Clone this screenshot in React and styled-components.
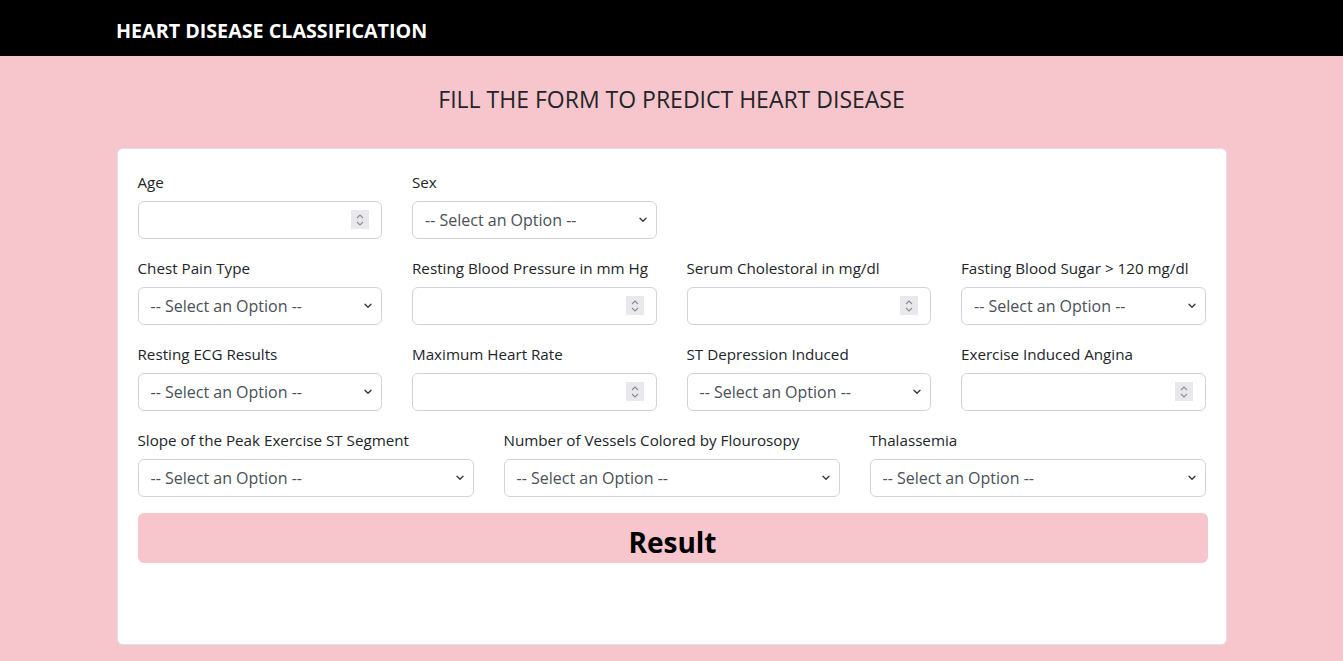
import styled, { createGlobalStyle } from 'styled-components';

const GlobalStyle = createGlobalStyle`
    * { box-sizing: border-box; }
    body {
        margin: 0;
        background: #f7c5cc;
        font-family: "Open Sans", "Noto Sans", sans-serif;
        color: #212529;
    }
`;

const Navbar = styled.nav`
    height: 56px;
    background: #000;
    display: flex;
    align-items: center;
    padding-left: 116px;
`;

const Brand = styled.div`
    color: #fff;
    font-weight: 700;
    font-size: 19.7px;
    padding-top: 4px;
`;

const Main = styled.main`
    padding-top: 29px;
    padding-bottom: 17px;
    display: flex;
    flex-direction: column;
    align-items: center;
`;

const Title = styled.h1`
    margin: 0 0 34px;
    font-size: 23px;
    font-weight: 400;
    line-height: 29px;
    color: #212529;
`;

const Card = styled.div`
    width: 1110px;
    background: #fff;
    border: 1px solid #dee2e6;
    border-radius: 6px;
    padding: 20px 20px 81px;
`;

const Row = styled.div`
    display: grid;
    grid-template-columns: repeat(${p => p.$cols}, 1fr);
    column-gap: 30px;
    margin-bottom: 16px;
`;

const Field = styled.div`
    display: flex;
    flex-direction: column;
`;

const Label = styled.label`
    font-size: 15.2px;
    line-height: 24px;
    padding-top: 1px;
    margin-bottom: 7px;
`;

const Control = styled.div`
    position: relative;
    height: 38px;
`;

const Box = styled.div`
    height: 38px;
    border: 1px solid #ced4da;
    border-radius: 6px;
    background: #fff;
    padding: 0 12px;
    display: flex;
    align-items: center;
    font-size: 16px;
    color: #495057;
`;

const Spinner = styled.span`
    position: absolute;
    right: 13px;
    top: 9px;
    width: 18px;
    height: 19px;
    background: #e9e9ed;
    display: flex;
    align-items: center;
    justify-content: center;
`;

const Chevron = styled.svg`
    position: absolute;
    right: 9px;
    top: 15px;
`;

const ResultButton = styled.button`
    display: block;
    width: 1070px;
    height: 50px;
    border: none;
    border-radius: 6px;
    background: #f7c5cc;
    color: #000;
    font-family: inherit;
    font-weight: 700;
    font-size: 28px;
    padding: 8px 0 0;
`;

function NumberInput() {
    return (
        <Control>
            <Box />
            <Spinner>
                <svg width="10" height="14" viewBox="0 0 10 14" fill="none" stroke="#8a8a90" strokeWidth="1.1">
                    <path d="M2 5 L5 2 L8 5" />
                    <path d="M2 9 L5 12 L8 9" />
                </svg>
            </Spinner>
        </Control>
    );
}

function SelectInput() {
    return (
        <Control>
            <Box>-- Select an Option --</Box>
            <Chevron width="10" height="8" viewBox="0 0 10 8" fill="none" stroke="#343a40" strokeWidth="1.4" strokeLinecap="round" strokeLinejoin="round">
                <path d="M2 2.2 L5 5.2 L8 2.2" />
            </Chevron>
        </Control>
    );
}

const rows = [
    { cols: 4, fields: [['Age', 'num'], ['Sex', 'sel']] },
    { cols: 4, fields: [['Chest Pain Type', 'sel'], ['Resting Blood Pressure in mm Hg', 'num'], ['Serum Cholestoral in mg/dl', 'num'], ['Fasting Blood Sugar > 120 mg/dl', 'sel']] },
    { cols: 4, fields: [['Resting ECG Results', 'sel'], ['Maximum Heart Rate', 'num'], ['ST Depression Induced', 'sel'], ['Exercise Induced Angina', 'num']] },
    { cols: 3, fields: [['Slope of the Peak Exercise ST Segment', 'sel'], ['Number of Vessels Colored by Flourosopy', 'sel'], ['Thalassemia', 'sel']] },
];

export default function App() {
    return (
        <>
            <GlobalStyle />
            <Navbar>
                <Brand>HEART DISEASE CLASSIFICATION</Brand>
            </Navbar>
            <Main>
                <Title>FILL THE FORM TO PREDICT HEART DISEASE</Title>
                <Card>
                    {rows.map((row, i) => (
                        <Row key={i} $cols={row.cols}>
                            {row.fields.map(([label, kind]) => (
                                <Field key={label}>
                                    <Label>{label}</Label>
                                    {kind === 'num' ? <NumberInput /> : <SelectInput />}
                                </Field>
                            ))}
                        </Row>
                    ))}
                    <ResultButton>Result</ResultButton>
                </Card>
            </Main>
        </>
    );
}
